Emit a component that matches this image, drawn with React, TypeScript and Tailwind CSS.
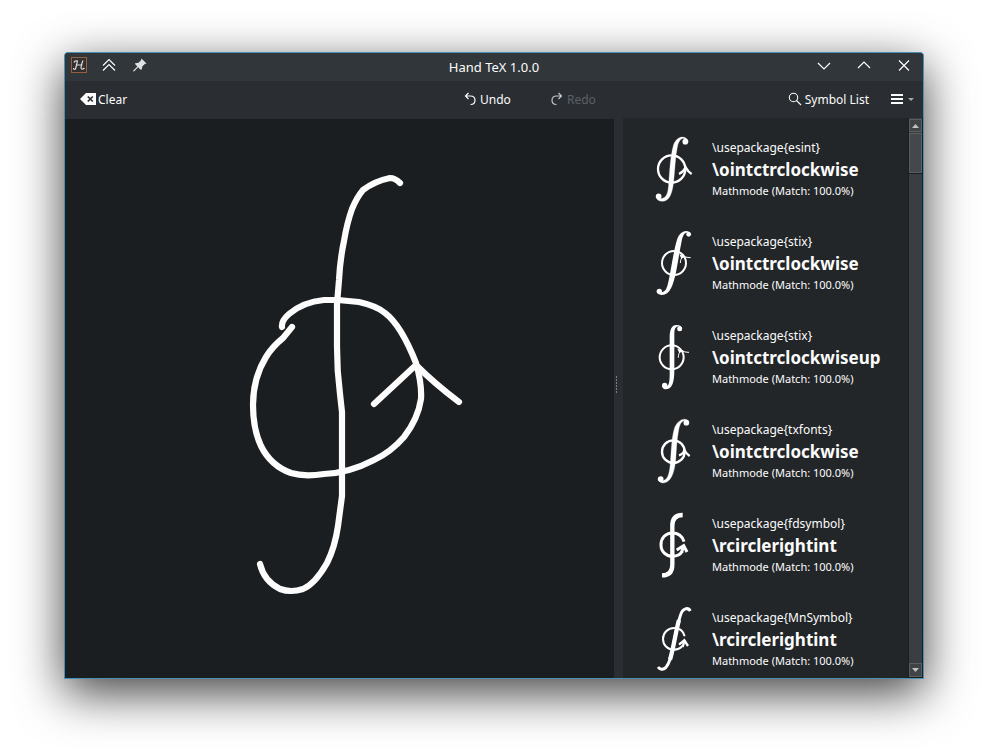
import React from 'react';

type Entry = { pkg: string; cmd: string; glyph: React.ReactNode };

const entries: Entry[] = [
  {
    pkg: 'esint',
    cmd: '\\ointctrclockwise',
    glyph: (
      <>
        <circle cx="95" cy="132" r="41" strokeWidth="7" />
        <path d="M137 43C127 37 117 43 112 66C106 95 105 130 101 168C97 208 87 229 67 229C57 229 50 224 48 216L60 220C79 222 84 205 86 180C89 140 91 95 100 62C110 30 140 30 145 50Z" fill="white" strokeWidth="1" />
        <circle cx="136" cy="50" r="8.5" fill="white" stroke="none" />
        <circle cx="56" cy="214" r="8.5" fill="white" stroke="none" />
        <path d="M117 147C126 143 133 136 137 127C142 136 148 143 155 147" strokeWidth="7" />
      </>
    ),
  },
  {
    pkg: 'stix',
    cmd: '\\ointctrclockwise',
    glyph: (
      <>
        <circle cx="102" cy="132" r="36" strokeWidth="6" />
        <path d="M145 42C134 38 129 48 125 66C118 100 114 130 108 160C99 200 90 229 64 228C56 227 51 223 51 216L63 220C78 220 82 204 87 180C95 140 101 95 111 62C121 32 147 30 153 46Z" fill="white" stroke="none" />
        <circle cx="146" cy="46" r="7" fill="white" stroke="none" />
        <circle cx="58" cy="217" r="8" fill="white" stroke="none" />
        <path d="M121 132C121 122 124 117 130 113C137 114 145 116 152 116" strokeWidth="3" />
        <path d="M118 106L137 112L124 119Z" fill="white" stroke="none" />
      </>
    ),
  },
  {
    pkg: 'stix',
    cmd: '\\ointctrclockwiseup',
    glyph: (
      <>
        <circle cx="95" cy="133" r="36" strokeWidth="6" />
        <path d="M118 41C108 39 103 46 103 62V170C103 205 98 229 76 229C70 229 66 224 66 217L76 221C87 221 89 205 89 185V75C89 50 95 36 109 36C119 36 126 40 126 48Z" fill="white" stroke="none" />
        <circle cx="119" cy="47" r="7.5" fill="white" stroke="none" />
        <circle cx="74" cy="217" r="8" fill="white" stroke="none" />
        <path d="M115 134C115 124 118 117 123 113C130 116 139 118 147 118" strokeWidth="3" />
        <path d="M112 107L131 113L118 120Z" fill="white" stroke="none" />
      </>
    ),
  },
  {
    pkg: 'txfonts',
    cmd: '\\ointctrclockwise',
    glyph: (
      <>
        <circle cx="100" cy="134" r="34" strokeWidth="7" />
        <path d="M142 43C129 38 121 44 116 68C110 100 109 130 107 160C102 205 90 228 68 228C60 227 54 222 54 214L67 221C82 220 87 204 90 180C94 140 94 95 103 65C112 36 141 28 147 46Z" fill="white" strokeWidth="1" />
        <circle cx="139" cy="47" r="8.5" fill="white" stroke="none" />
        <circle cx="62" cy="216" r="8.5" fill="white" stroke="none" />
        <path d="M117 145C125 143 131 137 133 129C138 138 143 143 149 147" strokeWidth="7" />
      </>
    ),
  },
  {
    pkg: 'fdsymbol',
    cmd: '\\rcirclerightint',
    glyph: (
      <>
        <path d="M128 42C108 42 97 52 97 74V191C97 213 87 223 66 223" strokeWidth="13" />
        <path d="M132 122C127 105 114 96 97 96C77 96 63 111 63 131C63 152 78 166 98 166C111 166 121 161 127 151" strokeWidth="9" />
        <path d="M110 147L131 134L141 153" strokeWidth="9" strokeLinejoin="miter" />
        <path d="M131 134L125 154" strokeWidth="9" />
      </>
    ),
  },
  {
    pkg: 'MnSymbol',
    cmd: '\\rcirclerightint',
    glyph: (
      <>
        <path d="M151 48C145 37 128 37 121 62C113 87 106 120 101 147C96 178 88 206 77 218C69 226 59 223 54 216" strokeWidth="9" />
        <path d="M117 75C108 105 101 159 90 194" strokeWidth="13" />
        <path d="M134 124C130 107 117 99 102 99C83 99 69 114 69 132C69 151 84 164 102 164C112 164 120 161 127 153" strokeWidth="6" />
        <path d="M117 149L133 136L144 153" strokeWidth="7" strokeLinejoin="miter" />
        <path d="M134 135L128 156" strokeWidth="7" />
      </>
    ),
  },
];

function TitleBar() {
  return (
    <header className="grid h-7 shrink-0 grid-cols-3 items-center bg-[#31363b] text-[#fcfcfc]">
      <div className="flex items-center pb-1 pl-[5px]">
        <svg width="18" height="18" viewBox="0 0 18 18" fill="none">
          <rect x="1.5" y="1.5" width="15" height="15" fill="#31302f" stroke="#97603f" />
          <path d="M4 6.5Q4.5 4.5 7.5 5Q6.5 9 5.5 13Q3.5 14 3.5 12M13 4.5Q11 9 11 12Q11.5 14.5 14.5 12M6 9H12.5" stroke="#dddddd" strokeWidth="1.2" />
        </svg>
        <svg className="ml-[12px]" width="18" height="18" viewBox="0 0 18 18" fill="none" stroke="currentColor" strokeWidth="1.2">
          <path d="M3 9.5L9 3.5L15 9.5M3 14.5L9 8.5L15 14.5" />
        </svg>
        <svg className="ml-[14px]" width="16" height="16" viewBox="0 0 16 16" fill="#dfe0e0">
          <path d="M9.5 1.5L14.5 6.5L12.5 7.2L10.3 9.5L9.7 12.8L8 12.3L6.2 10.3L2.3 14.2L1 14.5L1.5 13.3L5.4 9.5L3.4 7.6L3 6.2L6.5 5.8L8.8 3.5Z" />
        </svg>
      </div>
      <div className="pb-px text-center text-[13px] leading-5">Hand TeX 1.0.0</div>
      <div className="flex items-center justify-end gap-[22px] pr-[10px] pb-1">
        <svg width="18" height="18" viewBox="0 0 18 18" fill="none" stroke="currentColor" strokeWidth="1.2"><path d="M3 7L9 13L15 7" /></svg>
        <svg width="18" height="18" viewBox="0 0 18 18" fill="none" stroke="currentColor" strokeWidth="1.2"><path d="M3 12L9 6L15 12" /></svg>
        <svg width="18" height="18" viewBox="0 0 18 18" fill="none" stroke="currentColor" strokeWidth="1.2"><path d="M4 4.5L14 14.5M14 4.5L4 14.5" /></svg>
      </div>
    </header>
  );
}

function ToolBar() {
  return (
    <nav className="flex h-[37px] shrink-0 items-center bg-[#2a2e32] pr-2 pl-[15px] text-[12px] leading-[19px] text-[#fcfcfc]">
      <button className="flex w-[382px] items-center gap-[2px]">
        <svg className="mb-px" width="16" height="16" viewBox="0 0 16 16">
          <path d="M6 2H16V14H6L0 8Z" fill="#fcfcfc" />
          <path d="M7.8 5.5L12.8 10.5M12.8 5.5L7.8 10.5" stroke="#2a2e32" strokeWidth="1.7" />
        </svg>
        <span>Clear</span>
      </button>
      <button className="flex w-[87px] items-center gap-[2px]">
        <svg className="mb-px" width="16" height="16" viewBox="0 0 16 16" fill="none" stroke="currentColor" strokeWidth="1.2">
          <path d="M6.5 2L3.5 5L6.5 8M3.5 5H8.5C11.5 5 13 6.8 13 9.2C13 11.8 11.3 13.5 8.5 13.5" />
        </svg>
        <span>Undo</span>
      </button>
      <button className="flex items-center gap-[2px] text-[#5a6067]">
        <svg className="mb-px text-[#c5c7c9]" width="16" height="16" viewBox="0 0 16 16" fill="none" stroke="currentColor" strokeWidth="1.2">
          <path d="M9.5 2L12.5 5L9.5 8M12.5 5H7.5C4.5 5 3 6.8 3 9.2C3 11.8 4.7 13.5 7.5 13.5" />
        </svg>
        <span>Redo</span>
      </button>
      <button className="ml-auto flex items-center gap-[2px]">
        <svg className="mb-px" width="16" height="16" viewBox="0 0 16 16" fill="none" stroke="currentColor" strokeWidth="1.1">
          <circle cx="6.5" cy="6.5" r="4.2" /><path d="M9.5 9.5L14 14" />
        </svg>
        <span>Symbol List</span>
      </button>
      <button className="ml-[22px] flex items-center gap-1">
        <svg width="13" height="11" viewBox="0 0 13 11" fill="#fcfcfc"><path d="M0 0H12V2H0ZM0 4H12V6H0ZM0 8H12V10H0Z" /></svg>
        <svg width="7" height="4" viewBox="0 0 7 4"><path d="M0 0H6L3 3Z" fill="#a5a8aa" /></svg>
      </button>
    </nav>
  );
}

function Drawing() {
  return (
    <svg className="block" width="549" height="559" viewBox="65 119 549 559" fill="none" stroke="#fcfcfc" strokeWidth="6.2" strokeLinecap="round" strokeLinejoin="round">
      <path d="M400 183Q395 178 390 178Q375 181 363 190Q357 197 352 209Q347 223 344 241Q340 260 339 280L337 304V347Q337 371 340 394L342 412V496L338 526Q335 547 327 563Q315 584 303 589Q291 593 280 589Q264 581 260 564" />
      <path d="M282 327Q281 321 289 314Q303 302 324 300H338L359 302Q377 306 385 313Q401 325 416 363Q422 384 421 399Q418 419 404 437Q391 452 374 460Q349 473 324 474Q304 477 291 473Q271 466 261 446Q253 429 253 405Q253 378 266 357Q272 347 283 338L292 327" />
      <path d="M374 404L416 365Q435 384 459 402" />
    </svg>
  );
}

function ScrollBar() {
  return (
    <div className="flex w-[15px] shrink-0 flex-col border-x border-[#1b1e20] bg-[#3a3d41]">
      <div className="mt-px flex h-[13px] items-center justify-center border border-[#5a5e61] bg-[#404447]">
        <svg width="7" height="4" viewBox="0 0 7 4"><path d="M0 4L3.5 0L7 4Z" fill="#bfc1c2" /></svg>
      </div>
      <div className="mt-px h-[40px] border border-[#5a5e61] bg-[#44484c]" />
      <div className="h-px bg-[#1b1e20]" />
      <div className="mt-auto flex h-[14px] items-center justify-center border border-[#5a5e61] bg-[#404447]">
        <svg width="7" height="4" viewBox="0 0 7 4"><path d="M0 0H7L3.5 4Z" fill="#bfc1c2" /></svg>
      </div>
      <div className="h-px shrink-0 bg-[#1b1e20]" />
    </div>
  );
}

export default function App() {
  return (
    <div className="h-[755px] w-[988px] overflow-hidden bg-white pt-[52px] pl-[64px] font-['Noto_Sans',sans-serif]">
      <main className="flex h-[627px] w-[860px] flex-col overflow-hidden rounded-t-[4px] border border-[#4a90b4] bg-[#2a2e32] shadow-[0_14px_48px_rgba(0,0,0,0.75)]">
        <TitleBar />
        <ToolBar />
        <div className="flex min-h-0 flex-1">
          <section className="mt-px w-[549px] shrink-0 bg-[#1b1e20]">
            <Drawing />
          </section>
          <div className="flex w-[9px] shrink-0 items-center justify-center bg-[#2a2e32]">
            <div className="mt-[-27px] mr-[4px] flex flex-col gap-px">
              {[0, 1, 2, 3, 4, 5].map((n) => <i key={n} className="h-[2px] w-px bg-[#7a7e80]" />)}
            </div>
          </div>
          <section className="min-w-0 flex-1 overflow-hidden bg-[#232629] pt-[4px] text-[#fcfcfc]">
            {entries.map((e, i) => (
              <article key={i} className="flex h-[94px] items-center pl-[27px]">
                <svg className="mr-[17px] shrink-0" width="45" height="68" viewBox="30 30 135 204" fill="none" stroke="white">{e.glyph}</svg>
                <div className="pt-px pb-[2px] whitespace-nowrap">
                  <div className="text-[12px] leading-[18px]">{`\\usepackage{${e.pkg}}`}</div>
                  <div className="text-[17px] leading-[26px] font-bold">{e.cmd}</div>
                  <div className="text-[11px] leading-[15px]">Mathmode (Match: 100.0%)</div>
                </div>
              </article>
            ))}
          </section>
          <ScrollBar />
        </div>
      </main>
    </div>
  );
}
